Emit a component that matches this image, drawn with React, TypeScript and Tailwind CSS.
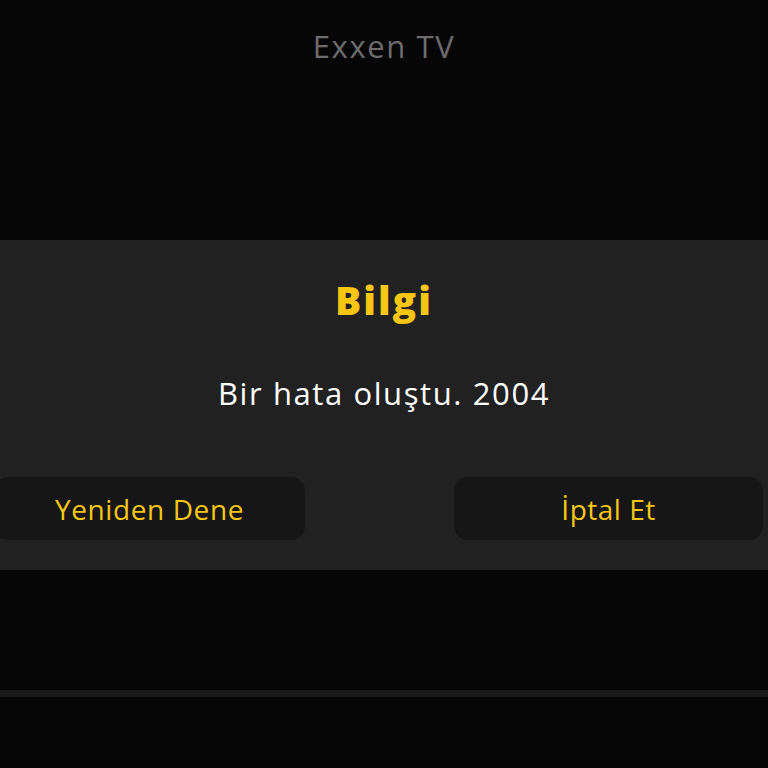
export default function App() {
  const font = { fontFamily: '"Open Sans", "Noto Sans", sans-serif' };
  return (
    <div className="w-[768px] h-[768px] bg-[#060606] flex flex-col overflow-hidden" style={font}>
      <div className="h-[240px] flex justify-center pt-[26px]">
        <div className="text-[31px] leading-[40px] text-[#6c6c6c] tracking-[1.6px]">Exxen TV</div>
      </div>
      <div className="h-[330px] bg-[#212121] flex flex-col items-center">
        <div className="mt-[37px] text-[39px] leading-[46px] font-extrabold text-[#f7c613] tracking-[2px]">Bilgi</div>
        <div className="mt-[50px] text-[31px] leading-[40px] font-medium text-white tracking-[1.6px]">Bir hata oluştu. 2004</div>
        <div className="mt-[64px] w-full flex justify-between">
          <button className="ml-[-6px] w-[311px] h-[63px] rounded-[14px] bg-[#161616] text-[28px] font-medium text-[#f7c613] tracking-[0.6px] flex items-center justify-center">
            Yeniden Dene
          </button>
          <button className="mr-[5px] w-[309px] h-[63px] rounded-[14px] bg-[#161616] text-[28px] font-medium text-[#f7c613] tracking-[0.5px] flex items-center justify-center">
            İptal Et
          </button>
        </div>
      </div>
      <div className="h-[120px]" />
      <div className="h-[7px] bg-[#1a1a1a]" />
    </div>
  );
}
